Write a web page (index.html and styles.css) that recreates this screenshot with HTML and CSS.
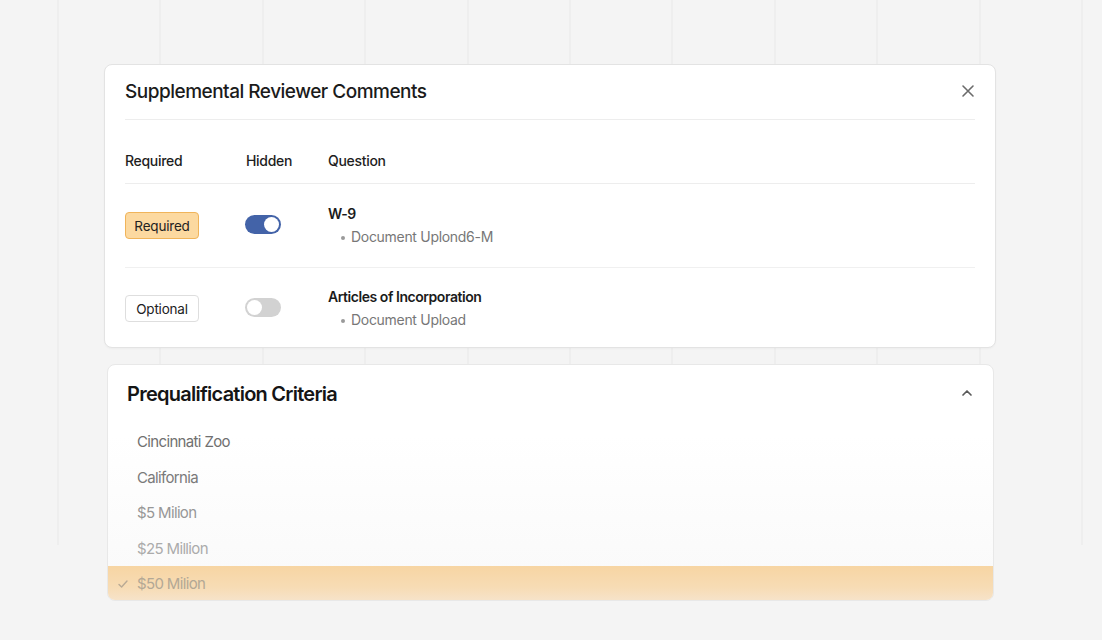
FILE: index.html
```html
<!DOCTYPE html>
<html lang="en">
<head>
<meta charset="utf-8">
<title>Supplemental Reviewer Comments</title>
<link rel="stylesheet" href="styles.css">
</head>
<body>
<main class="page">
  <section class="card comments">
    <div class="inner">
      <header class="card-head">
        <h2 class="card-title">Supplemental Reviewer Comments</h2>
        <button class="icon-btn" aria-label="Close">
          <svg width="14" height="14" viewBox="0 0 14 14" fill="none" stroke="#6b6b6b" stroke-width="1.6" stroke-linecap="round"><path d="M2 2l10 10M12 2L2 12"/></svg>
        </button>
      </header>
      <div class="grid-row head-row">
        <span>Required</span>
        <span>Hidden</span>
        <span>Question</span>
      </div>
      <div class="grid-row item-row">
        <div><span class="badge badge-required">Required</span></div>
        <div><span class="toggle on"><span class="knob"></span></span></div>
        <div class="question">
          <div class="q-title">W-9</div>
          <ul class="q-list"><li>Document Uplond6-M</li></ul>
        </div>
      </div>
      <div class="grid-row item-row">
        <div><span class="badge badge-optional">Optional</span></div>
        <div><span class="toggle off"><span class="knob"></span></span></div>
        <div class="question">
          <div class="q-title">Articles of Incorporation</div>
          <ul class="q-list"><li>Document Upload</li></ul>
        </div>
      </div>
    </div>
  </section>

  <section class="card criteria">
    <header class="crit-head">
      <h2 class="crit-title">Prequalification Criteria</h2>
      <svg class="chev" width="14" height="14" viewBox="0 0 14 14" fill="none" stroke="#5a5a5a" stroke-width="1.7" stroke-linecap="round" stroke-linejoin="round"><path d="M3 9l4-4 4 4"/></svg>
    </header>
    <ul class="options">
      <li class="opt o1">Cincinnati Zoo</li>
      <li class="opt o2">California</li>
      <li class="opt o3">$5 Milion</li>
      <li class="opt o4">$25 Million</li>
      <li class="opt o5 selected">
        <svg class="check" width="12" height="12" viewBox="0 0 12 12" fill="none" stroke="#b9aa95" stroke-width="1.4" stroke-linecap="round" stroke-linejoin="round"><path d="M2 6.5l2.6 2.5L10 3"/></svg>
        $50 Milion
      </li>
    </ul>
  </section>
</main>
</body>
</html>
```

FILE: styles.css
```css
* { box-sizing: border-box; }

html, body { height: 100%; }

body {
  margin: 0;
  font-family: Inter, "Noto Sans", "DejaVu Sans", sans-serif;
  color: #1c1c1c;
  background-color: #f4f4f4;
  background-image: repeating-linear-gradient(90deg,
      transparent 0px, transparent 57px,
      #eeeeee 57px, #eeeeee 59px,
      transparent 59px, transparent 102.4px);
  background-size: 100% 545px;
  background-repeat: no-repeat;
}

.page {
  padding: 64px 0 0 104px;
}

.card {
  background: #fff;
  border: 1px solid #e3e3e3;
  border-radius: 8px;
}

.comments {
  width: 892px;
  height: 284px;
  box-shadow: 0 1px 2px rgba(0,0,0,0.03);
}

.inner {
  padding: 0 20px;
}

.card-head {
  height: 55px;
  display: flex;
  align-items: center;
  justify-content: space-between;
  border-bottom: 1px solid #ededed;
}

.card-title {
  margin: 0;
  font-size: 19px;
  font-weight: 500;
  letter-spacing: -0.5px;
  color: #1b1b1b;
  padding-bottom: 2px;
}

.icon-btn {
  border: 0;
  background: none;
  padding: 0;
  width: 14px;
  height: 14px;
  display: flex;
  margin-right: 0;
  margin-bottom: 2px;
  cursor: pointer;
}

.grid-row {
  display: grid;
  grid-template-columns: 121px 82px 1fr;
  align-items: center;
}

.head-row {
  height: 64px;
  align-items: end;
  padding-bottom: 12px;
  border-bottom: 1px solid #ededed;
  font-size: 14px;
  font-weight: 500;
  line-height: 20px;
  letter-spacing: -0.3px;
  color: #1e1e1e;
}

.item-row {
  height: 83px;
}

.item-row + .item-row {
  border-top: 1px solid #f0f0f0;
  height: 82px;
}

.badge {
  display: inline-flex;
  align-items: center;
  justify-content: center;
  width: 74px;
  height: 27px;
  border-radius: 4px;
  font-size: 13.5px;
  letter-spacing: -0.2px;
  color: #222;
}

.badge-required {
  background: #fcd9a0;
  border: 1px solid #f0b45a;
}

.badge-optional {
  background: #fff;
  border: 1px solid #dedede;
}

.toggle {
  display: inline-flex;
  align-items: center;
  width: 36px;
  height: 19px;
  border-radius: 10px;
  padding: 2px;
  margin-left: -1px;
}

.toggle.on {
  background: #4363a8;
  justify-content: flex-end;
}

.toggle.off {
  background: #d2d2d2;
  justify-content: flex-start;
}

.knob {
  width: 15px;
  height: 15px;
  border-radius: 50%;
  background: #fff;
}

.question {
  padding-bottom: 1px;
}

.q-title {
  font-size: 14px;
  font-weight: 600;
  line-height: 20px;
  letter-spacing: -0.45px;
  color: #1b1b1b;
}

.q-list {
  margin: 3px 0 0 0;
  padding: 0 0 0 23px;
  list-style: none;
}

.q-list li {
  position: relative;
  font-size: 14px;
  line-height: 20px;
  letter-spacing: -0.3px;
  color: #777;
}

.q-list li::before {
  content: "";
  position: absolute;
  left: -10px;
  top: 9px;
  width: 4px;
  height: 4px;
  border-radius: 50%;
  background: #9a9a9a;
}

.criteria {
  width: 887px;
  margin: 16px 0 0 3px;
  height: 237px;
  overflow: hidden;
  border-color: #e8e8e8;
  background: linear-gradient(180deg, #ffffff 0%, #ffffff 30%, #f9f9f9 100%);
}

.crit-head {
  height: 58px;
  display: flex;
  align-items: center;
  justify-content: space-between;
  padding: 0 19px 0 19px;
}

.crit-title {
  margin: 0;
  font-size: 20px;
  font-weight: 600;
  letter-spacing: -0.75px;
  color: #151515;
}

.chev { display: block; margin-bottom: 2px; }

.options {
  list-style: none;
  margin: 0;
  padding: 1px 0 0 0;
}

.opt {
  height: 35.5px;
  display: flex;
  align-items: center;
  padding-left: 29px;
  font-size: 15px;
  letter-spacing: -0.65px;
}

.o1 { color: #707070; }
.o2 { color: #7a7a7a; }
.o3 { color: #979797; }
.o4 { color: #ababab; }
.o5 { color: #b3a895; }

.selected {
  position: relative;
  background: linear-gradient(180deg, #f7d5a3 0%, #f7dcb5 60%, #f6e4cc 100%);
}

.check {
  position: absolute;
  left: 9px;
  top: 12px;
}
```
